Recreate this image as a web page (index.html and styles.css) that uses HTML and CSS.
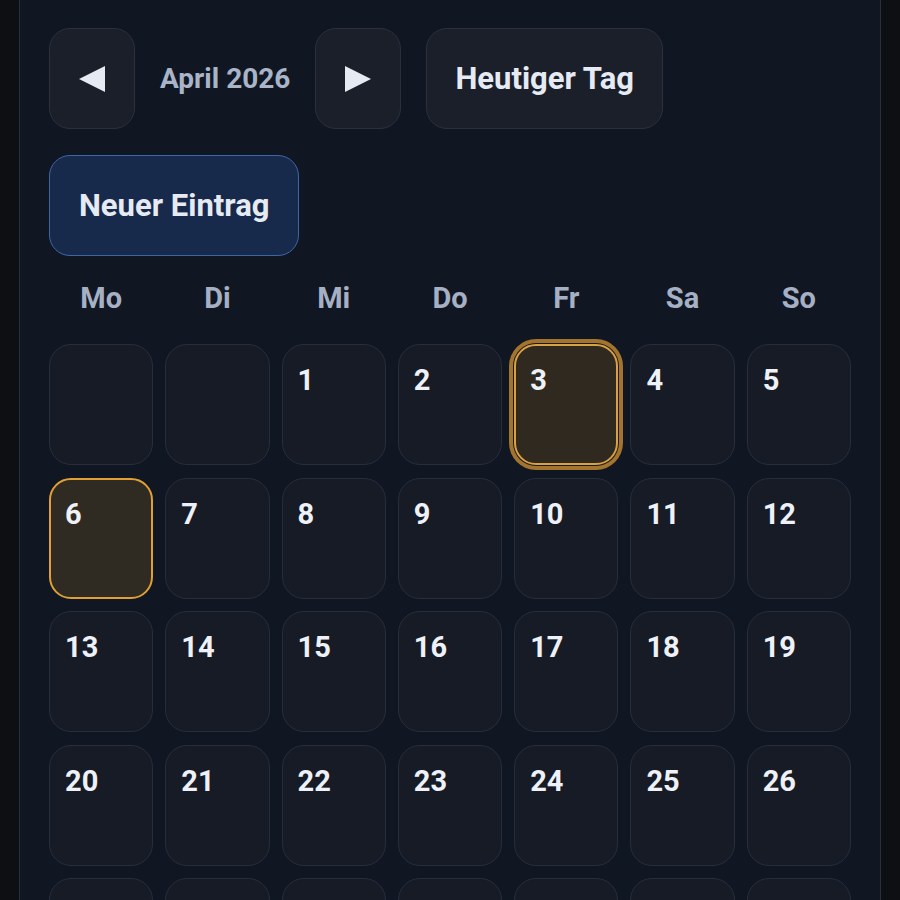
FILE: index.html
```html
<!DOCTYPE html>
<html lang="de">
<head>
    <meta charset="UTF-8">
    <meta name="viewport" content="width=device-width, initial-scale=1.0">
    <title>Kalender</title>
    <link rel="stylesheet" href="styles.css">
</head>
<body>
    <div class="panel">
        <div class="toolbar">
            <button class="btn btn-icon" aria-label="Vorheriger Monat">
                <svg width="26" height="26" viewBox="0 0 26 26"><polygon points="0,13 26,0 26,26" fill="currentColor"/></svg>
            </button>
            <span class="month-label">April 2026</span>
            <button class="btn btn-icon" aria-label="Nächster Monat">
                <svg width="26" height="26" viewBox="0 0 26 26"><polygon points="26,13 0,0 0,26" fill="currentColor"/></svg>
            </button>
            <button class="btn">Heutiger Tag</button>
        </div>

        <div class="actions">
            <button class="btn btn-primary">Neuer Eintrag</button>
        </div>

        <div class="weekdays">
            <div>Mo</div>
            <div>Di</div>
            <div>Mi</div>
            <div>Do</div>
            <div>Fr</div>
            <div>Sa</div>
            <div>So</div>
        </div>

        <div class="days">
            <div class="day empty"></div>
            <div class="day empty"></div>
            <div class="day">1</div>
            <div class="day">2</div>
            <div class="day today">3</div>
            <div class="day">4</div>
            <div class="day">5</div>

            <div class="day selected">6</div>
            <div class="day">7</div>
            <div class="day">8</div>
            <div class="day">9</div>
            <div class="day">10</div>
            <div class="day">11</div>
            <div class="day">12</div>

            <div class="day">13</div>
            <div class="day">14</div>
            <div class="day">15</div>
            <div class="day">16</div>
            <div class="day">17</div>
            <div class="day">18</div>
            <div class="day">19</div>

            <div class="day">20</div>
            <div class="day">21</div>
            <div class="day">22</div>
            <div class="day">23</div>
            <div class="day">24</div>
            <div class="day">25</div>
            <div class="day">26</div>

            <div class="day">27</div>
            <div class="day">28</div>
            <div class="day">29</div>
            <div class="day">30</div>
            <div class="day empty"></div>
            <div class="day empty"></div>
            <div class="day empty"></div>
        </div>
    </div>
</body>
</html>
```

FILE: styles.css
```css
body {
    margin: 0;
    background-color: #0d0f13; /* outer dark page */
    font-family: Roboto, "Liberation Sans", sans-serif;
    color: #e6eaf3;
    overflow: hidden;
}

.panel {
    margin-left: 19px;
    width: 862px;
    box-sizing: border-box;
    min-height: 1100px;
    padding: 28px 29px 40px;
    background-color: #111722;
    border-left: 1px solid #282f3d;
    border-right: 1px solid #282f3d;
}

/* toolbar */
.toolbar {
    display: flex;
    align-items: center;
    gap: 25px;
}

.btn {
    height: 101px;
    box-sizing: border-box;
    padding: 0 28px;
    border: 1px solid #2a303d;
    border-radius: 21px;
    background-color: #1b1f2a;
    color: #e6eaf3;
    font-family: inherit;
    font-size: 31px;
    font-weight: 700;
    cursor: pointer;
}

.btn-icon {
    width: 86px;
    padding: 0;
    display: flex;
    align-items: center;
    justify-content: center;
}

.btn-primary {
    background-color: #172a4b;
    border-color: #3c66a8;
    padding: 0 29px;
}

.month-label {
    font-size: 28px;
    font-weight: 700;
    color: #a9b4c8;
}

.actions {
    margin-top: 26px;
    display: flex;
}

/* weekday header */
.weekdays {
    display: grid;
    grid-template-columns: repeat(7, 1fr);
    column-gap: 12px;
    margin: 25px 0 29px;
    font-size: 29px;
    font-weight: 700;
    color: #a6b0c4;
    text-align: center;
}

/* day grid */
.days {
    display: grid;
    grid-template-columns: repeat(7, 1fr);
    column-gap: 12px;
    row-gap: 12.5px;
}

.day {
    height: 121px;
    box-sizing: border-box;
    padding: 18px 15px;
    border: 1px solid #262e3e;
    border-radius: 22px;
    background-color: #161b26;
    font-size: 29px;
    font-weight: 700;
    color: #eef1f7;
}

.day.selected {
    border: 2px solid #e0a035;
    background-color: #2f2a22;
    padding: 17px 14px;
}

.day.today {
    border: 2px solid #d9a045;
    background-color: #2f2920;
    padding: 17px 14px;
    box-shadow: 0 0 0 1px #1d1a14, 0 0 0 5px #a3742e;
}
```
